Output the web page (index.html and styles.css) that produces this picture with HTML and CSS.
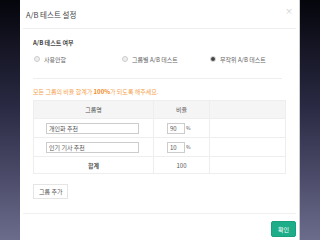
FILE: index.html
```html
<!DOCTYPE html>
<html>
<head>
    <title>A/B 테스트 설정</title>
    <link rel="stylesheet" href="styles.css">
</head>
<body>
    <div class="modal">
        <div class="modal-header">
            <h1>A/B 테스트 설정</h1>
            <span class="close">×</span>
        </div>

        <div class="modal-body">
            <div class="label">A/B 테스트 여부</div>
            <div class="radio-row">
                <label class="radio"><span class="dot"></span>사용안함</label>
                <label class="radio"><span class="dot"></span>그룹별 A/B 테스트</label>
                <label class="radio"><span class="dot checked"></span>무작위 A/B 테스트</label>
            </div>

            <p class="notice">모든 그룹의 비율 합계가 <strong>100%</strong>가 되도록 해주세요.</p>

            <table class="group-table">
                <thead>
                    <tr>
                        <th class="col-name">그룹명</th>
                        <th class="col-ratio">비율</th>
                        <th></th>
                    </tr>
                </thead>
                <tbody>
                    <tr>
                        <td><input type="text" class="name-input" value="개인화 추천"></td>
                        <td class="ratio-cell"><input type="text" class="ratio-input" value="90"> %</td>
                        <td></td>
                    </tr>
                    <tr>
                        <td><input type="text" class="name-input" value="인기 기사 추천"></td>
                        <td class="ratio-cell"><input type="text" class="ratio-input" value="10"> %</td>
                        <td></td>
                    </tr>
                    <tr class="total">
                        <td><strong>합계</strong></td>
                        <td>100</td>
                        <td></td>
                    </tr>
                </tbody>
            </table>

            <button class="add-button">그룹 추가</button>
        </div>

        <div class="modal-footer">
            <button class="ok-button">확인</button>
        </div>
    </div>
</body>
</html>
```

FILE: styles.css
```css
html, body {
    margin: 0;
    height: 240px;
    overflow: hidden;
}
body {
    font-family: "Noto Sans CJK KR", "Noto Sans", sans-serif;
    background: linear-gradient(#05050c, #2a2a44 45%, #6b6b8c);
    color: #555;
}
.modal {
    margin-left: 20px;
    width: 279px;
    height: 240px;
    background: #fff;
    border-right: 1px solid #ccc;
}
.modal-header {
    height: 28px;
    margin: 0 3px;
    padding: 0 3px;
    display: flex;
    align-items: center;
    justify-content: space-between;
    border-bottom: 1px solid #eee;
}
.modal-header h1 {
    margin: 0;
    font-size: 7.5px;
    font-weight: normal;
    color: #444;
}
.close {
    font-size: 8px;
    color: #ccc;
    margin-top: -7px;
}
.modal-body {
    margin: 0 3px;
    padding: 9px 14px 14px 10px;
    border-bottom: 1px solid #f0f0f0;
}
.label {
    font-size: 6px;
    font-weight: bold;
    color: #444;
    line-height: 10px;
}
.radio-row {
    display: flex;
    height: 22px;
    align-items: center;
    border-bottom: 1px solid #eee;
    padding-bottom: 8px;
}
.radio {
    display: flex;
    flex-shrink: 0;
    align-items: center;
    font-size: 6px;
    color: #666;
    width: 88px;
}
.dot {
    width: 4px;
    height: 4px;
    border: 1px solid #ccc;
    border-radius: 50%;
    background: #eee;
    margin: 0 4px 0 1px;
}
.dot.checked {
    background: #444;
    border-color: #ddd;
}
.notice {
    margin: 8px 0 4px;
    font-size: 6px;
    color: #f5a04a;
    line-height: 9px;
}
.notice strong {
    color: #f08a24;
}
.group-table {
    width: 253px;
    border-collapse: collapse;
    font-size: 6px;
    color: #555;
}
.group-table th {
    background: #f5f5f5;
    font-weight: normal;
    height: 17px;
    padding: 0;
    border: 1px solid #eee;
}
.group-table td {
    height: 18px;
    padding: 0;
    border: 1px solid #eee;
    text-align: center;
    color: #555;
}
.col-name {
    width: 119px;
}
.col-ratio {
    width: 55px;
}
.name-input {
    display: block;
    width: 93px;
    height: 11px;
    box-sizing: border-box;
    margin-left: 12px;
    padding: 0 2px;
    border: 1px solid #ccc;
    font-family: inherit;
    font-size: 6px;
    color: #555;
}
.ratio-cell {
    text-align: left;
    font-size: 5px;
}
.group-table td.ratio-cell {
    text-align: left;
}
.ratio-input {
    width: 18px;
    height: 11px;
    box-sizing: border-box;
    padding: 0 2px;
    border: 1px solid #ccc;
    font-family: inherit;
    font-size: 6px;
    color: #555;
    margin-left: 13px;
    vertical-align: middle;
}
.total td {
    height: 16px;
}
.add-button {
    margin-top: 10px;
    height: 15px;
    padding: 0 5px;
    background: #fff;
    border: 1px solid #e5e5e5;
    font-family: inherit;
    font-size: 6px;
    color: #555;
}
.modal-footer {
    display: flex;
    justify-content: flex-end;
    padding: 7px 3px 0 0;
}
.ok-button {
    width: 25px;
    height: 16px;
    background: #1dae89;
    border: 1px solid #18a07e;
    border-radius: 2px;
    color: #fff;
    font-family: inherit;
    font-size: 6px;
    padding: 0;
}
```
